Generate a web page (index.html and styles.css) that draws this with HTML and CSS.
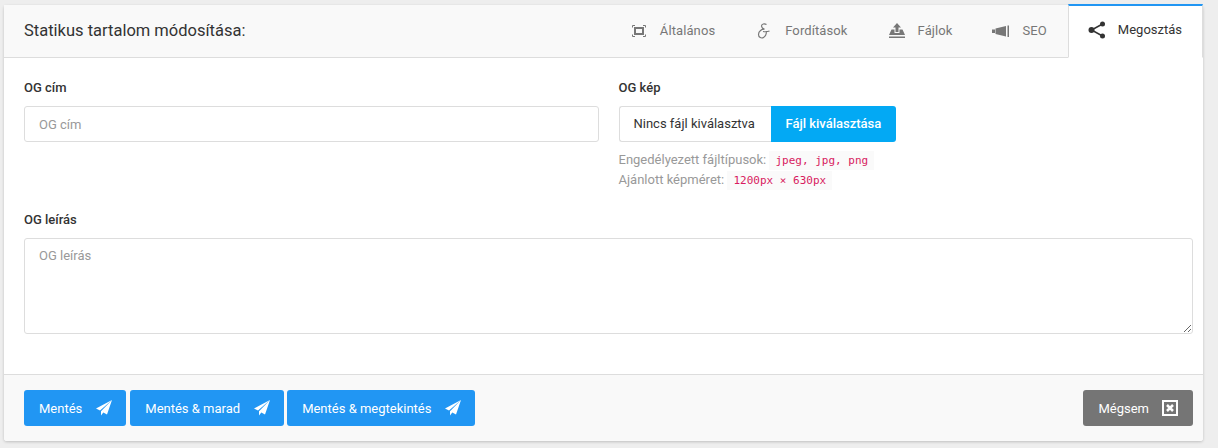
FILE: index.html
```html
<!DOCTYPE html>
<html lang="en">
<head>
    <meta charset="UTF-8">
    <meta name="viewport" content="width=device-width, initial-scale=1.0">
    <title>Statikus tartalom módosítása</title>
    <link rel="stylesheet" href="styles.css">
</head>
<body>
    <div class="card">
        <header class="card-header">
            <h1>Statikus tartalom módosítása:</h1>
            <nav class="tabs">
                <a class="tab">
                    <svg class="icon" viewBox="0 0 18 16"><path fill="none" stroke="currentColor" stroke-width="1" d="M2.500 4.500V2.500H5M13 2.500h2.500V4.500M15.500 11.500v2H13M5 13.500H2.500V11.500"/><path fill="none" stroke="currentColor" stroke-width="2" d="M5 5h8v6H5z"/></svg>
                    Általános
                </a>
                <a class="tab">
                    <svg class="icon" viewBox="0 0 18 16"><path fill="none" stroke="currentColor" stroke-width="1.200" d="M11.500 1.500C9.500 .3 6.500 .8 6.500 3c0 2 2.500 3 3 3.200C7 6 3.500 8 3.500 11.500c0 3 3 4.200 5 3 2-1.200 3-4 3-6.500M8 8.500c2.500.5 4 .5 6.500-.5"/></svg>
                    Fordítások
                </a>
                <a class="tab">
                    <svg class="icon" viewBox="0 0 18 16"><path fill="currentColor" d="M9 0l4 4.500h-2.500V9h-3V4.500H5zM3.500 6.500h3V10h5V6.500h3L17 12H1zM1 13.500h16V15H1z"/></svg>
                    Fájlok
                </a>
                <a class="tab">
                    <svg class="icon" viewBox="0 0 18 16"><path fill="currentColor" d="M0 6.500h3v3.500H0zM3.500 5.500L14 3v10.500L3.500 11zM15.500 2.500H17v11.500h-1.500z"/></svg>
                    SEO
                </a>
                <a class="tab tab-active">
                    <svg class="icon icon-share" viewBox="0 0 18 18"><path fill="none" stroke="currentColor" stroke-width="1.500" d="M14.500 3L3.500 9l11 6"/><circle cx="14.500" cy="3" r="2.500" fill="currentColor"/><circle cx="3.500" cy="9" r="3" fill="currentColor"/><circle cx="14.500" cy="15" r="2.500" fill="currentColor"/></svg>
                    Megosztás
                </a>
            </nav>
        </header>

        <div class="card-body">
            <div class="row">
                <div class="form-group">
                    <label>OG cím</label>
                    <input class="form-control" type="text" placeholder="OG cím">
                </div>
                <div class="form-group">
                    <label>OG kép</label>
                    <div class="file-input">
                        <span class="file-name">Nincs fájl kiválasztva</span>
                        <span class="file-button">Fájl kiválasztása</span>
                    </div>
                    <div class="hint">Engedélyezett fájltípusok: <code>jpeg, jpg, png</code></div>
                    <div class="hint">Ajánlott képméret: <code>1200px × 630px</code></div>
                </div>
            </div>
            <div class="form-group">
                <label>OG leírás</label>
                <textarea class="form-control" placeholder="OG leírás"></textarea>
            </div>
        </div>

        <footer class="card-footer">
            <div class="actions">
                <button class="btn">Mentés <svg class="btn-icon" viewBox="0 0 16 16"><path fill="currentColor" d="M16 0L0 8.500l4 2zM16 0L5 11.200v4.300l2.300-3 3.700 2z"/></svg></button>
                <button class="btn">Mentés &amp; marad <svg class="btn-icon" viewBox="0 0 16 16"><path fill="currentColor" d="M16 0L0 8.500l4 2zM16 0L5 11.200v4.300l2.300-3 3.700 2z"/></svg></button>
                <button class="btn">Mentés &amp; megtekintés <svg class="btn-icon" viewBox="0 0 16 16"><path fill="currentColor" d="M16 0L0 8.500l4 2zM16 0L5 11.200v4.300l2.300-3 3.700 2z"/></svg></button>
            </div>
            <button class="btn btn-grey">Mégsem <svg class="btn-icon" viewBox="0 0 16 16"><path fill="none" stroke="currentColor" stroke-width="2" d="M1 1h14v14H1z"/><path fill="none" stroke="currentColor" stroke-width="2.500" d="M5 5l6 6M11 5l-6 6"/></svg></button>
        </footer>
    </div>
</body>
</html>
```

FILE: styles.css
```css
* {
    box-sizing: border-box;
}
body {
    font-family: Roboto, Arial, sans-serif;
    font-size: 13px;
    line-height: 20px;
    margin: 0;
    padding: 5px 15px 7px 4px;
    background-color: #eeeeee;
    color: #333333;
}
.card {
    background: #ffffff;
    border-radius: 3px;
    box-shadow: 0 1px 3px rgba(0, 0, 0, 0.2);
}
.card-header {
    display: flex;
    justify-content: space-between;
    height: 53px;
    padding-left: 20px;
    background: #f9f9f9;
    border-bottom: 1px solid #dddddd;
}
.card-header h1 {
    margin: 0;
    font-size: 16.5px;
    font-weight: 400;
    line-height: 52px;
}
.tabs {
    display: flex;
}
.tab {
    display: flex;
    align-items: center;
    gap: 12px;
    padding: 0 20px 4px;
    height: 53px;
    color: #777777;
    letter-spacing: 0.1px;
    border-top: 2px solid transparent;
}
.tab-active {
    height: 54px;
    margin-top: -1px;
    margin-left: 1px;
    padding-left: 19px;
    background: #ffffff;
    color: #333333;
    letter-spacing: 0;
    border-top-color: #2196f3;
    border-left: 1px solid #dddddd;
    border-right: 1px solid #dddddd;
    border-bottom: 1px solid #ffffff;
}
.icon {
    width: 18px;
    height: 16px;
}
.icon-share {
    height: 18px;
}
.card-body {
    padding: 20px 10px 20px 20px;
    height: 316px;
}
.row {
    display: grid;
    grid-template-columns: 1fr 1fr;
    gap: 20px;
}
.form-group {
    margin-bottom: 20px;
}
label {
    display: block;
    margin-bottom: 8px;
    font-weight: 500;
}
.form-control {
    display: block;
    width: 100%;
    height: 36px;
    padding: 7px 14px;
    font-family: inherit;
    font-size: 13px;
    line-height: 20px;
    color: #333333;
    background: #ffffff;
    border: 1px solid #dddddd;
    border-radius: 3px;
    outline: none;
}
.form-control::placeholder {
    color: #999999;
}
textarea.form-control {
    height: 96px;
}
.file-input {
    display: flex;
    width: 277px;
    height: 36px;
    line-height: 34px;
    margin-bottom: 8px;
}
.file-name {
    width: 152px;
    padding-left: 14px;
    border: 1px solid #dddddd;
    border-right: none;
    border-radius: 3px 0 0 3px;
}
.file-button {
    flex: 1;
    padding: 1px 0 1px 15px;
    background: #03a9f4;
    color: #ffffff;
    font-weight: 500;
    border-radius: 0 3px 3px 0;
}
.hint {
    color: #999999;
    line-height: 20px;
    height: 20px;
}
code {
    font-family: "DejaVu Sans Mono", monospace;
    font-size: 11px;
    line-height: 1;
    padding: 3px 6px;
    color: #d81b60;
    background: #fafafa;
}
.card-footer {
    display: flex;
    justify-content: space-between;
    height: 67px;
    padding: 15px 10px 15px 20px;
    background: #f9f9f9;
    border-top: 1px solid #dddddd;
    border-radius: 0 0 3px 3px;
}
.actions {
    display: flex;
    gap: 3px;
}
.btn {
    display: flex;
    align-items: center;
    gap: 14px;
    height: 36px;
    padding: 0 14px 0 15px;
    font-family: inherit;
    font-size: 13px;
    font-weight: 400;
    color: #ffffff;
    background: #2196f3;
    border: none;
    border-radius: 3px;
}
.btn:first-child {
    margin-right: 1px;
}
.btn-grey {
    gap: 13px;
    padding-right: 15px;
    background: #757575;
}
.btn-icon {
    width: 16px;
    height: 16px;
}
```
